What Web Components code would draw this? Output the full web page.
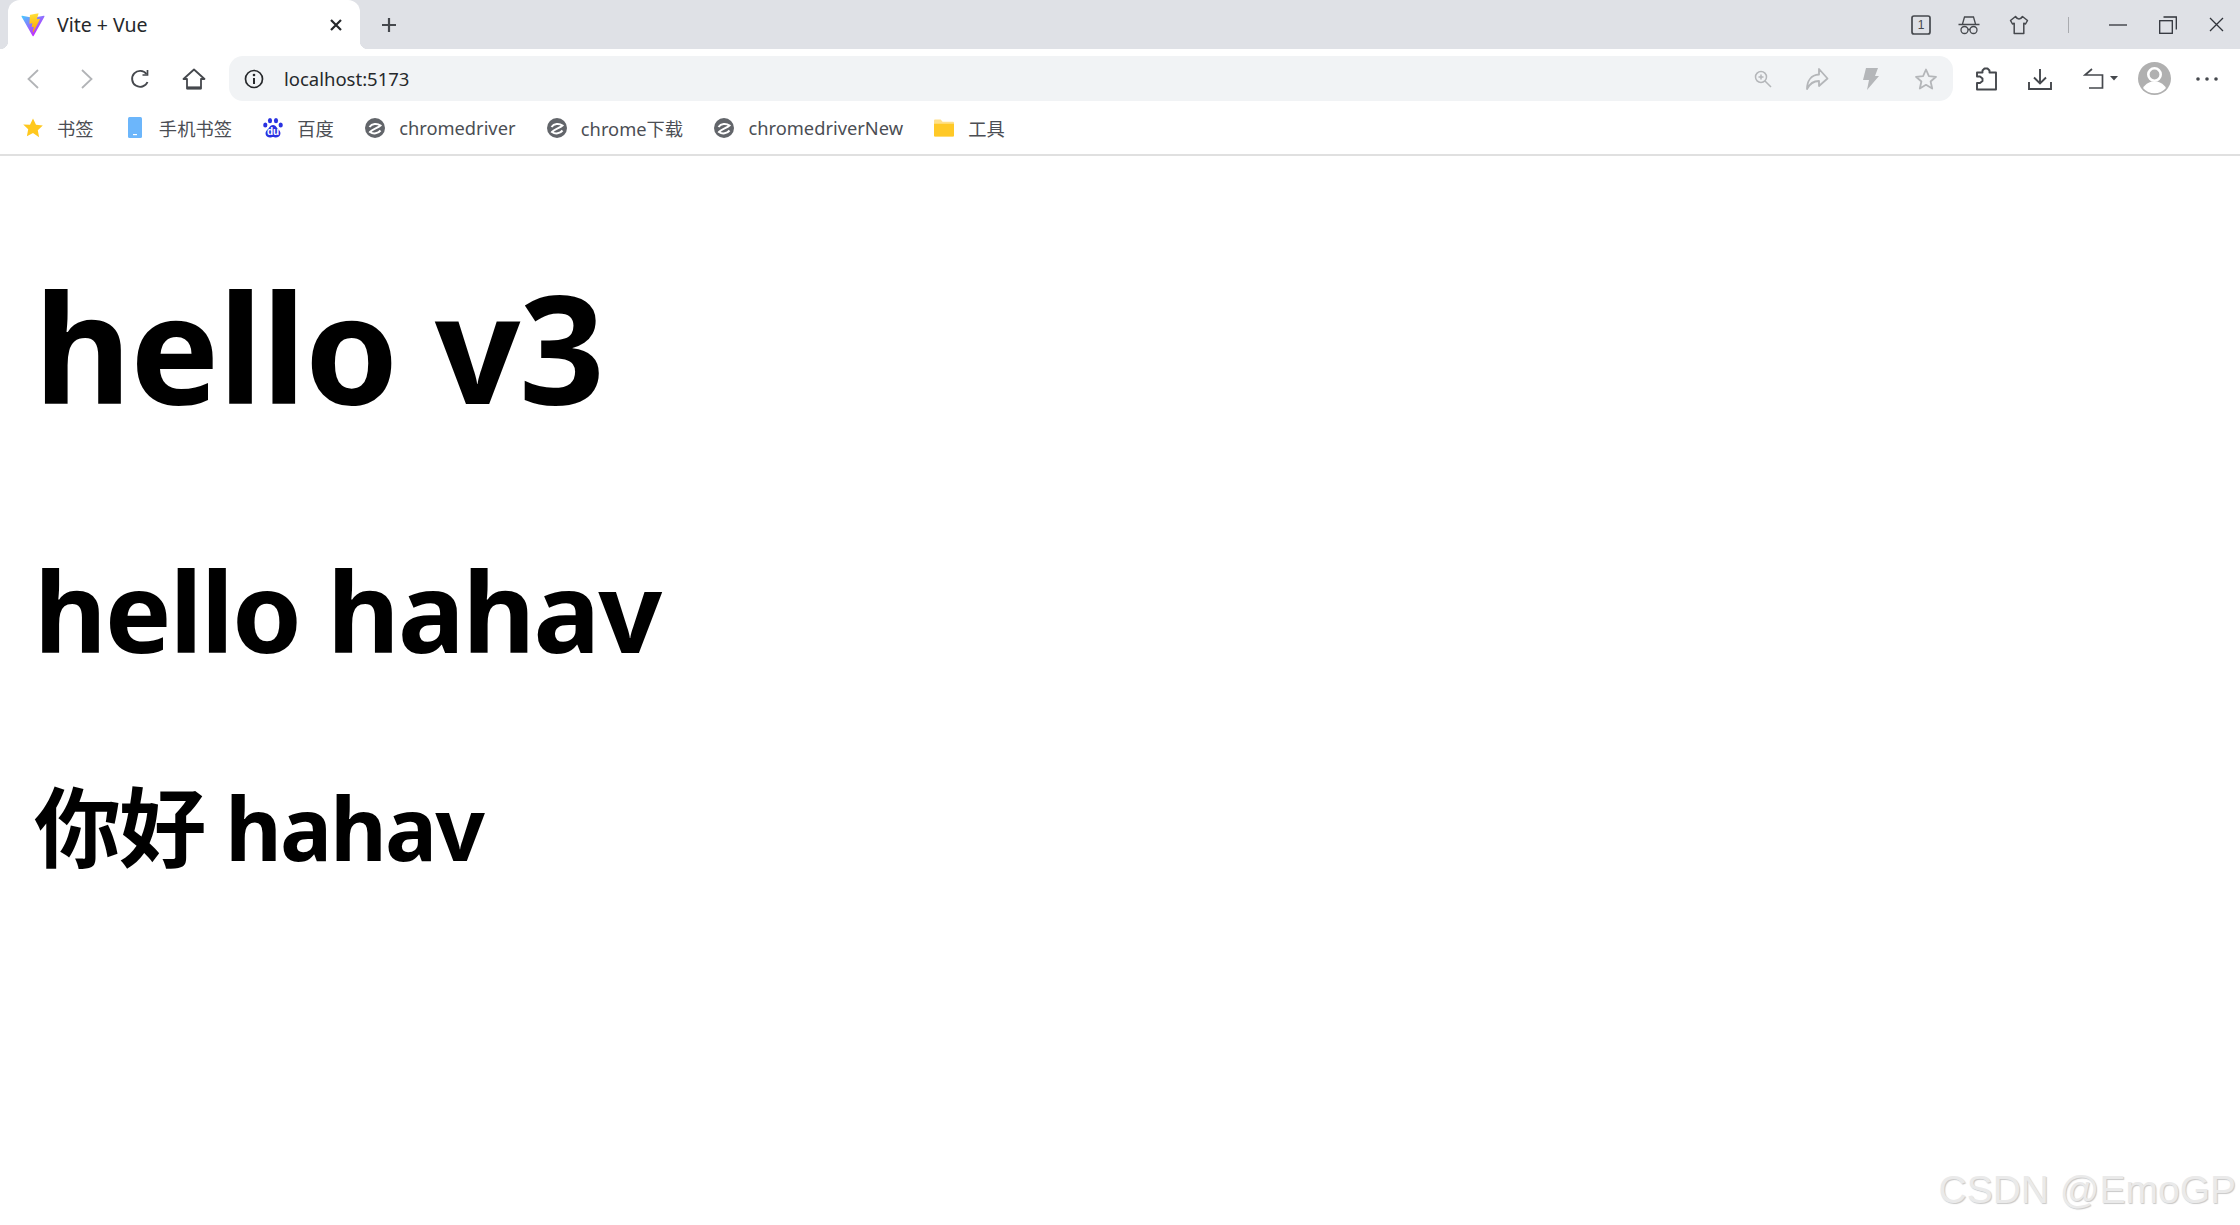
<!DOCTYPE html>
<html lang="zh">
<head>
<meta charset="utf-8">
<title>Vite + Vue</title>
<style>
  html, body { margin: 0; height: 100%; background: #fff; overflow: hidden; }
  body { position: relative; display: flex; flex-direction: column; font-family: "Noto Sans", "Noto Sans CJK SC", sans-serif; }
</style>
</head>
<body>
<browser-tabs title-text="Vite + Vue"></browser-tabs>
<browser-toolbar url="localhost:5173"></browser-toolbar>
<bookmark-bar></bookmark-bar>
<demo-page>
  <h1>hello v3</h1>
  <h2>hello hahav</h2>
  <h3>你好 hahav</h3>
</demo-page>
<water-mark>CSDN @EmoGP</water-mark>

<script>
const ICONS = {
  vite: `<svg width="24" height="24" viewBox="0 0 410 404"><defs>
      <linearGradient id="va" x1="6" y1="33" x2="235" y2="344" gradientUnits="userSpaceOnUse"><stop stop-color="#41D1FF"/><stop offset="1" stop-color="#BD34FE"/></linearGradient>
      <linearGradient id="vb" x1="194" y1="8" x2="236" y2="293" gradientUnits="userSpaceOnUse"><stop stop-color="#FFEA83"/><stop offset=".08" stop-color="#FFDD35"/><stop offset="1" stop-color="#FFA800"/></linearGradient></defs>
      <path fill="url(#va)" d="M399.641 59.5246L215.643 388.545C211.844 395.338 202.084 395.378 198.228 388.618L10.5817 59.5563C6.38087 52.1896 12.6802 43.2665 21.0281 44.7586L205.223 77.6824C206.398 77.8924 207.601 77.8904 208.776 77.6763L389.119 44.8058C397.439 43.2894 403.768 52.1434 399.641 59.5246Z"/>
      <path fill="url(#vb)" d="M292.965 1.5744L156.801 28.2552C154.563 28.6937 152.906 30.5903 152.771 32.8664L144.395 174.33C144.198 177.662 147.258 180.248 150.51 179.498L188.42 170.749C191.967 169.931 195.172 173.055 194.443 176.622L183.18 231.775C182.422 235.487 185.907 238.661 189.532 237.56L212.947 230.446C216.577 229.344 220.065 232.527 219.297 236.242L201.398 322.875C200.278 328.294 207.486 331.249 210.492 326.603L212.5 323.5L323.454 102.072C325.312 98.3645 322.108 94.137 318.036 94.9228L279.014 102.454C275.347 103.161 272.227 99.746 273.262 96.1583L298.731 7.86689C299.767 4.27314 296.636 0.855181 292.965 1.5744Z"/></svg>`,
  close: `<svg width="14" height="14" viewBox="0 0 14 14"><path d="M2 2l10 10M12 2L2 12" fill="none" stroke="#26282b" stroke-width="2.2"/></svg>`,
  plus: `<svg width="16" height="16" viewBox="0 0 16 16"><path d="M8 1v14M1 8h14" fill="none" stroke="#45484d" stroke-width="2.2"/></svg>`,
  tabCount: `<svg width="22" height="22" viewBox="0 0 22 22"><rect x="2" y="2" width="18" height="18" rx="2" fill="none" stroke="#45484d" stroke-width="1.7"/><text x="11" y="15.200" text-anchor="middle" font-size="12" fill="#45484d" font-family="Liberation Sans">1</text></svg>`,
  incognito: `<svg width="24" height="22" viewBox="0 0 24 22" fill="none" stroke="#45484d" stroke-width="1.3"><path d="M1.500 10.500h21M5.500 10l2-7h9l2 7"/><circle cx="7.500" cy="16" r="3.500"/><circle cx="16.500" cy="16" r="3.500"/><path d="M11 15.500h2"/></svg>`,
  shirt: `<svg width="20" height="20" viewBox="0 0 20 20" fill="none" stroke="#45484d" stroke-width="1.500" stroke-linejoin="round"><path d="M6.500 1.500L1.500 5.500l2 3.500 1.700-.8v10.300h9.600V8.200l1.700.8 2-3.500-5-4Q12 4 10 4T6.500 1.500z"/></svg>`,
  minimize: `<svg width="18" height="2" viewBox="0 0 18 2"><path d="M0 1h18" stroke="#30333a" stroke-width="1.300"/></svg>`,
  restore: `<svg width="18" height="18" viewBox="0 0 18 18" fill="none" stroke="#30333a" stroke-width="1.300"><rect x=".7" y="4.700" width="12.600" height="12.600"/><path d="M4.500 1h12.800v12.500"/></svg>`,
  winClose: `<svg width="15" height="15" viewBox="0 0 15 15"><path d="M1 1l13 13M14 1L1 14" fill="none" stroke="#30333a" stroke-width="1.300"/></svg>`,
  back: `<svg width="14" height="22" viewBox="0 0 14 22"><path d="M12 2L2.500 11l9.500 9" fill="none" stroke="#b2b4b7" stroke-width="1.800"/></svg>`,
  forward: `<svg width="14" height="22" viewBox="0 0 14 22"><path d="M2 2l9.500 9L2 20" fill="none" stroke="#b2b4b7" stroke-width="1.800"/></svg>`,
  reload: `<svg width="20" height="20" viewBox="0 0 20 20" fill="none" stroke="#45484d" stroke-width="1.900"><path d="M16.500 5A8 8 0 1 0 17.500 13"/><path d="M17.500 1v5h-5" stroke-width="1.700"/></svg>`,
  home: `<svg width="24" height="22" viewBox="0 0 24 22" fill="none" stroke="#45484d" stroke-width="1.800" stroke-linejoin="round"><path d="M1.500 11L12 1.500 22.500 11h-3.500v9.500H5V11z"/><path d="M5 19.800h14" stroke-width="2.800"/></svg>`,
  info: `<svg width="20" height="20" viewBox="0 0 20 20"><circle cx="10" cy="10" r="8.500" fill="none" stroke="#26282b" stroke-width="1.700"/><path d="M10 9v6" stroke="#26282b" stroke-width="2"/><circle cx="10" cy="6" r="1.300" fill="#26282b"/></svg>`,
  zoom: `<svg width="18" height="18" viewBox="0 0 18 18" fill="none" stroke="#b4b6b9" stroke-width="1.500"><circle cx="7" cy="7" r="5.500"/><path d="M11 11l6 6M7 4.500v5M4.500 7h5"/></svg>`,
  share: `<svg width="24" height="24" viewBox="0 0 24 24" fill="none" stroke="#b4b6b9" stroke-width="1.800" stroke-linejoin="round"><path d="M14 2l8.500 9.500L14 19v-5C8 14 4.500 17 2 22c0-8 4-14 12-14.500z"/></svg>`,
  bolt: `<svg width="16" height="24" viewBox="0 0 16 24"><path d="M3 1h12l-3 8h4L4 23l2-10H0z" fill="#b4b6b9"/></svg>`,
  star: `<svg width="24" height="24" viewBox="0 0 24 24"><path d="M12 2.500l2.900 6.600 7.100.7-5.400 4.700 1.600 7-6.200-3.700-6.200 3.700 1.600-7L2 9.800l7.100-.7z" fill="none" stroke="#b4b6b9" stroke-width="1.800" stroke-linejoin="round"/></svg>`,
  puzzle: `<svg width="22" height="24" viewBox="0 0 22 24" fill="none" stroke="#45484d" stroke-width="1.900" stroke-linejoin="round"><path d="M7.500 5.500V3.500L9.500 1.500H12.500L14.500 3.500V5.500H21V22.500H2V16H5L7.500 14V11.500L5 9.500H2V5.500Z"/></svg>`,
  download: `<svg width="24" height="22" viewBox="0 0 24 22" fill="none" stroke="#45484d" stroke-width="1.900"><path d="M12 1v14M6 9.500l6 6 6-6M1 14v7h22v-7"/></svg>`,
  undo: `<svg width="35" height="22" viewBox="0 0 35 22"><path d="M9 1L2 7h17.500v13H6" fill="none" stroke="#45484d" stroke-width="1.700"/><path d="M27 8h8l-4 4.500z" fill="#45484d"/></svg>`,
  avatar: `<svg width="33" height="33" viewBox="0 0 33 33"><circle cx="16.500" cy="16.500" r="16.500" fill="#b0b0b0"/><circle cx="16.500" cy="12.500" r="6.200" fill="none" stroke="#fff" stroke-width="2.600"/><path d="M5 26c3-5 7-6.500 11.500-6.500S25 21 28 26a15 15 0 0 1-23 0z" fill="#fff"/></svg>`,
  dots: `<svg width="22" height="4" viewBox="0 0 22 4" fill="#45484d"><circle cx="2" cy="2" r="1.800"/><circle cx="11" cy="2" r="1.800"/><circle cx="20" cy="2" r="1.800"/></svg>`,
  bmStar: `<svg width="20" height="20" viewBox="0 0 20 20"><path d="M10 .5l3 6.300 6.800.8-5 4.700 1.300 6.900L10 15l-6.100 3.200 1.300-6.900-5-4.700L7 6.800z" fill="#ffc81e"/></svg>`,
  phone: `<svg width="14" height="21" viewBox="0 0 14 21"><rect width="14" height="21" rx="1.500" fill="#6cb6fb"/><rect x="5" y="17" width="4" height="1.200" fill="#fff"/></svg>`,
  baidu: `<svg width="20" height="20" viewBox="0 0 20 20"><g fill="#2932e1"><ellipse cx="2.300" cy="7" rx="2.100" ry="2.500"/><ellipse cx="7" cy="2.700" rx="2.100" ry="2.600"/><ellipse cx="13" cy="2.700" rx="2.100" ry="2.600"/><ellipse cx="17.700" cy="7" rx="2.100" ry="2.500"/><path d="M10 7c3 0 3.500 3 6 5 3 3 1 7.500-3 7.500-1.500 0-2-.5-3-.5s-1.500.5-3 .5c-4 0-6-4.500-3-7.500 2.500-2 3-5 6-5z"/></g><text x="10" y="17.400" text-anchor="middle" font-size="10" font-weight="700" fill="#fff" font-family="Liberation Sans">du</text></svg>`,
  edge: `<svg width="20" height="22" viewBox="0 0 20 22"><circle cx="10" cy="11" r="10" fill="#62656a"/><path d="M4.500 10C7 6.500 12 6 15.500 8.500 12.500 11.500 8 11.500 5 15 8.500 17.500 13 16.500 15.500 13.500" fill="none" stroke="#fff" stroke-width="2"/></svg>`,
  folder: `<svg width="21" height="18" viewBox="0 0 21 18"><path d="M0 1a1 1 0 0 1 1-1h6l2 2.500h11a1 1 0 0 1 1 1V17a1 1 0 0 1-1 1H1a1 1 0 0 1-1-1z" fill="#ffe08a"/><path d="M0 4.500h21V17a1 1 0 0 1-1 1H1a1 1 0 0 1-1-1z" fill="#ffc927"/></svg>`
};

class BrowserTabs extends HTMLElement {
  constructor() {
    super();
    this.attachShadow({ mode: "open" });
  }

  static get styles() {
    return /* css */`
      :host {
        display: flex;
        align-items: center;
        height: 49px;
        background: #dfe1e6;
        padding-left: 8px;
        color: #26282b;
        flex: none;
      }
      .tab {
        position: relative;
        display: flex;
        align-items: center;
        box-sizing: border-box;
        width: 352px;
        height: 49px;
        padding: 0 17px 0 13px;
        background: #fff;
        border-radius: 12px 12px 0 0;
        font: 19.5px "Noto Sans", "Noto Sans CJK SC", sans-serif;
      }
      .tab::before, .tab::after {
        content: "";
        position: absolute;
        bottom: 0;
        width: 8px;
        height: 8px;
      }
      .tab::before { left: -8px; background: radial-gradient(circle at 0 0, transparent 8px, #fff 8.5px); }
      .tab::after { right: -8px; background: radial-gradient(circle at 100% 0, transparent 8px, #fff 8.5px); }
      .title { flex: 1; margin-left: 12px; }
      .close { display: flex; }
      .plus { display: flex; margin-left: 21px; }
      .spacer { flex: 1; }
      .tool { display: flex; justify-content: center; align-items: center; }
      .sep { width: 1px; height: 16px; background: #a9abaf; margin: 0 40px 0 39px; }
    `;
  }

  connectedCallback() {
    this.shadowRoot.innerHTML = /* html */`
    <style>${BrowserTabs.styles}</style>
    <div class="tab">
      ${ICONS.vite}
      <span class="title">${this.getAttribute("title-text")}</span>
      <span class="close">${ICONS.close}</span>
    </div>
    <span class="plus">${ICONS.plus}</span>
    <span class="spacer"></span>
    <span class="tool" style="margin-right:25px">${ICONS.tabCount}</span>
    <span class="tool" style="margin-right:28px">${ICONS.incognito}</span>
    <span class="tool">${ICONS.shirt}</span>
    <span class="sep"></span>
    <span class="tool" style="margin-right:32px">${ICONS.minimize}</span>
    <span class="tool" style="margin-right:32px">${ICONS.restore}</span>
    <span class="tool" style="margin-right:16px">${ICONS.winClose}</span>`;
  }
}

class BrowserToolbar extends HTMLElement {
  constructor() {
    super();
    this.attachShadow({ mode: "open" });
  }

  static get styles() {
    return /* css */`
      :host {
        display: flex;
        align-items: center;
        height: 59px;
        background: #fff;
        flex: none;
      }
      .btn { display: flex; justify-content: center; align-items: center; flex: none; }
      .address {
        display: flex;
        align-items: center;
        box-sizing: border-box;
        width: 1724px;
        height: 45px;
        border-radius: 14px;
        background: #f1f3f5;
        padding: 0 15px;
        flex: none;
        font: 18.5px "Noto Sans", "Noto Sans CJK SC", sans-serif;
        color: #26282b;
      }
      .url { flex: 1; margin-left: 20px; }
    `;
  }

  connectedCallback() {
    this.shadowRoot.innerHTML = /* html */`
    <style>${BrowserToolbar.styles}</style>
    <span class="btn" style="margin-left:26px">${ICONS.back}</span>
    <span class="btn" style="margin-left:40px">${ICONS.forward}</span>
    <span class="btn" style="margin-left:36px">${ICONS.reload}</span>
    <span class="btn" style="margin-left:32px">${ICONS.home}</span>
    <div class="address" style="margin-left:23px">
      ${ICONS.info}
      <span class="url">${this.getAttribute("url")}</span>
      <span class="btn" style="margin-right:33px">${ICONS.zoom}</span>
      <span class="btn" style="margin-right:34px">${ICONS.share}</span>
      <span class="btn" style="margin-right:35px">${ICONS.bolt}</span>
      <span class="btn">${ICONS.star}</span>
    </div>
    <span class="btn" style="margin-left:22px">${ICONS.puzzle}</span>
    <span class="btn" style="margin-left:31px">${ICONS.download}</span>
    <span class="btn" style="margin-left:31px">${ICONS.undo}</span>
    <span class="btn" style="margin-left:19.5px">${ICONS.avatar}</span>
    <span class="btn" style="margin-left:25.5px">${ICONS.dots}</span>`;
  }
}

const BOOKMARKS = [
  ["bmStar", "书签"],
  ["phone", "手机书签"],
  ["baidu", "百度"],
  ["edge", "chromedriver"],
  ["edge", "chrome下载"],
  ["edge", "chromedriverNew"],
  ["folder", "工具"]
];

class BookmarkBar extends HTMLElement {
  constructor() {
    super();
    this.attachShadow({ mode: "open" });
  }

  static get styles() {
    return /* css */`
      :host {
        display: flex;
        align-items: center;
        gap: 31.3px;
        box-sizing: border-box;
        height: 48px;
        flex: none;
        padding: 0 0 7px 23px;
        background: #fff;
        border-bottom: 2px solid #e0e0e0;
        font: 18.3px "Noto Sans", "Noto Sans CJK SC", sans-serif;
        color: #4b4e54;
      }
      .item { display: flex; align-items: center; gap: 14px; }
      .icon { display: flex; justify-content: center; width: 20px; }
    `;
  }

  fillItems() {
    return BOOKMARKS.map(([icon, label]) => /* html */`<span class="item"><span class="icon">${ICONS[icon]}</span><span>${label}</span></span>`).join("");
  }

  connectedCallback() {
    this.shadowRoot.innerHTML = /* html */`
    <style>${BookmarkBar.styles}</style>
    ${this.fillItems()}`;
  }
}

class DemoPage extends HTMLElement {
  constructor() {
    super();
    this.attachShadow({ mode: "open" });
  }

  static get styles() {
    return /* css */`
      :host {
        display: block;
        flex: 1;
        background: #fff;
        color: #000;
        padding: 0 34px;
        font-family: "Noto Sans", "Noto Sans CJK SC", sans-serif;
      }
      ::slotted(h1) { font-size: 150px; line-height: 200px; margin: 90px 0 0; font-weight: 700; letter-spacing: -1.4px; }
      ::slotted(h2) { font-size: 112px; line-height: 150px; margin: 89px 0 0; font-weight: 700; letter-spacing: -2.1px; }
      ::slotted(h3) { font-size: 87px; line-height: 118px; margin: 83px 0 0; font-weight: 700; letter-spacing: -1.8px; }
    `;
  }

  connectedCallback() {
    this.shadowRoot.innerHTML = /* html */`
    <style>${DemoPage.styles}</style>
    <slot></slot>`;
  }
}

class WaterMark extends HTMLElement {
  constructor() {
    super();
    this.attachShadow({ mode: "open" });
  }

  connectedCallback() {
    this.shadowRoot.innerHTML = /* html */`
    <style>
      :host {
        position: absolute;
        right: 4px;
        bottom: 13px;
        font: 39px "Liberation Sans", sans-serif;
        color: #eaeaea;
        text-shadow: 1px 1px 1px #c8c8c8;
      }
    </style>
    <slot></slot>`;
  }
}

customElements.define("browser-tabs", BrowserTabs);
customElements.define("browser-toolbar", BrowserToolbar);
customElements.define("bookmark-bar", BookmarkBar);
customElements.define("demo-page", DemoPage);
customElements.define("water-mark", WaterMark);
</script>
</body>
</html>
